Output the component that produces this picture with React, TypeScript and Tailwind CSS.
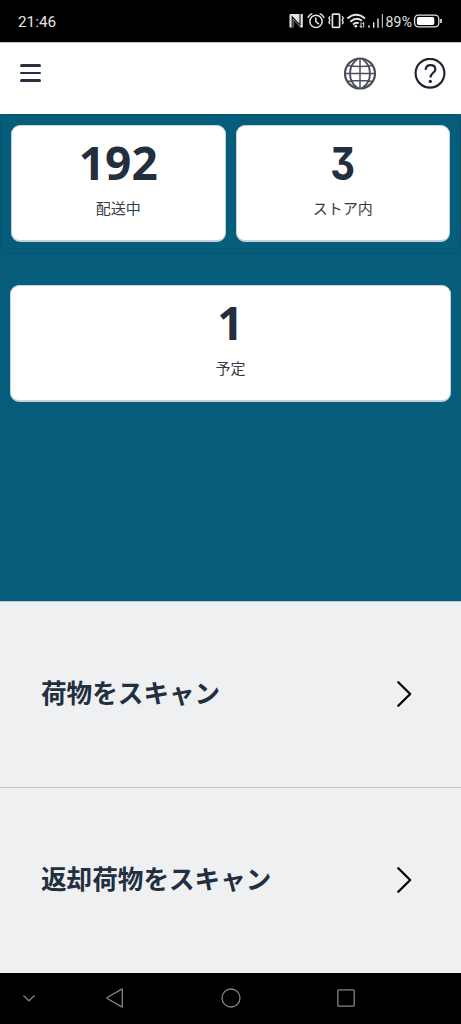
import type { ReactNode } from 'react';

type StatProps = {
  value: number;
  label: string;
};

type NavButtonProps = {
  label: string;
  children: ReactNode;
};

function StatusIcons() {
  return (
    <svg width="158" height="20" viewBox="286 11 158 20" fill="none" stroke="#e4e4e4" strokeWidth="1.5">
      {/* NFC */}
      <path d="M290.5 14H302.8V27.5H300.6L293.4 19.6V27.5H289.5V15Q289.5 14 290.5 14Z" fill="#e4e4e4" stroke="none" />
      <path d="M292.2 27.5V17L300 25.2V14" stroke="#000" strokeWidth="1.1" />
      {/* alarm */}
      <circle cx="316" cy="21.4" r="6.1" />
      <path d="M315.8 18V21.7L318.6 23.8M308.1 17.4Q309.3 15 311.8 13.9M323.9 17.4Q322.7 15 320.2 13.9" strokeLinecap="round" />
      {/* vibrate */}
      <rect x="332.4" y="14.2" width="7.2" height="13.2" rx="0.8" strokeWidth="1.7" />
      <path d="M329.9 16.3l-1 2 1 2-1 2 1 2M342.2 16.3l1 2-1 2 1 2-1 2" strokeWidth="1.4" />
      {/* wifi */}
      <path d="M347.4 18.4Q356.2 11 365 18.4M350.3 21.7Q356.4 16.5 362 20.8M353 24.5Q356 21.8 358.7 23.3" strokeWidth="1.9" />
      <circle cx="355.8" cy="26.2" r="1.4" fill="#e4e4e4" stroke="none" />
      <path d="M361 22.3V27.4M359.6 26l1.4 1.5 1.4-1.5M363.7 27.4V22.3M362.4 23.8l1.3-1.5" strokeWidth="1" />
      {/* signal */}
      <path d="M369 25.3V27.8M373.7 22.2V27.8M378 18.4V27.8" strokeWidth="1.4" />
      <path d="M382.4 14V27.8" strokeWidth="1.2" stroke="#b5b5b5" />
      <text x="385.5" y="26.6" fontSize="14" textLength="26.5" fill="#e4e4e4" stroke="none" className="font-[Roboto,sans-serif]">
        89%
      </text>
      {/* battery */}
      <rect x="414.6" y="15.1" width="24.2" height="11.8" rx="3.8" strokeWidth="1.3" />
      <rect x="416.9" y="17" width="17.4" height="8" rx="1.8" fill="#fff" stroke="none" />
      <path d="M441 19V23" strokeWidth="1.7" />
    </svg>
  );
}

function StatusBar() {
  return (
    <div className="flex h-[42px] items-center justify-between bg-black pl-[18px] pr-[17px] font-[Roboto,sans-serif] text-[15.3px] text-[#e4e4e4]">
      <span className="pt-[3px]">21:46</span>
      <StatusIcons />
    </div>
  );
}

function GlobeIcon() {
  return (
    <svg width="34" height="34" viewBox="0 0 34 34" fill="none" stroke="#4b5058" strokeWidth="1.5">
      <circle cx="17" cy="16.5" r="15" strokeWidth="2.2" />
      <path d="M17 1.5V31.5M2 16.5H32M4.4 8.6Q17 10.6 29.6 8.6M4.4 24.4Q17 22.4 29.6 24.4" />
      <path d="M14.5 2C4.5 9 4.5 24 14.5 31M19.5 2C29.5 9 29.5 24 19.5 31" strokeWidth="1.9" />
    </svg>
  );
}

function HelpIcon() {
  return (
    <svg width="32" height="32" viewBox="0 0 32 32" fill="none" stroke="#202733" strokeWidth="2.2">
      <circle cx="16" cy="15.2" r="14.4" />
      <path d="M11.6 11.8C11.8 8.9 13.6 7.2 16.4 7.2C19.3 7.2 21.3 8.9 21.3 11.4C21.3 14.8 16.5 14.9 16.5 19.4" />
      <circle cx="16.3" cy="23.4" r="1.7" fill="#202733" stroke="none" />
    </svg>
  );
}

function Header() {
  return (
    <header className="flex h-[72px] items-center border-t border-[#c4c4c4] bg-white pl-5 pr-[15px]">
      <button type="button" aria-label="メニュー" className="-mt-[11px] flex flex-col gap-[5px]">
        <span className="h-[2.5px] w-[21px] rounded-full bg-[#273040]" />
        <span className="h-[2.5px] w-[21px] rounded-full bg-[#273040]" />
        <span className="h-[2.5px] w-[21px] rounded-full bg-[#273040]" />
      </button>
      <div className="-mt-[9px] ml-auto flex items-center gap-[37px]">
        <button type="button" aria-label="言語">
          <GlobeIcon />
        </button>
        <button type="button" aria-label="ヘルプ">
          <HelpIcon />
        </button>
      </div>
    </header>
  );
}

function StatCard({ value, label }: StatProps) {
  // only Inter offers the flat-topped three, and it runs wider than Open Sans
  const digits =
    value === 3
      ? "scale-x-[0.85] font-[Inter,sans-serif] text-[45px] leading-[50px] [font-feature-settings:'cv09']"
      : "font-['Open_Sans','Noto_Sans',sans-serif] text-[46px] leading-[46px]";

  return (
    <div className="flex h-[117px] flex-1 flex-col items-center rounded-[9px] border border-b-2 border-[#c3d3da] bg-white pt-[13px]">
      <span className={`h-[50px] font-bold ${digits}`}>{value}</span>
      <span className="mt-[7px] text-[15px] leading-6 text-[#333b47]">{label}</span>
    </div>
  );
}

function ScanRow({ label }: { label: string }) {
  return (
    <button type="button" className="flex w-full flex-1 items-center justify-between border-t border-[#c1c3c5] pb-0.5 pl-[41px] pr-12">
      <span className="pb-[3px] text-[25.6px] font-bold leading-9">{label}</span>
      <svg width="18" height="30" viewBox="0 0 18 30" fill="none" stroke="#000" strokeWidth="2.3" strokeLinecap="round" strokeLinejoin="round">
        <path d="M3.3 3.2L15.2 15L3.3 26.8" />
      </svg>
    </button>
  );
}

function NavButton({ label, children }: NavButtonProps) {
  return (
    <button type="button" aria-label={label}>
      <svg width="24" height="24" viewBox="0 0 24 24" fill="none" stroke="#858585" strokeWidth="1.3" strokeLinejoin="round">
        {children}
      </svg>
    </button>
  );
}

function NavBar() {
  return (
    <nav className="flex h-[51px] items-center bg-black pb-px pl-[17px]">
      <NavButton label="閉じる">
        <path d="M6.5 9.5L12 14.7L17.5 9.5" />
      </NavButton>
      <div className="ml-[62px] flex gap-[91.5px]">
        <NavButton label="戻る">
          <path d="M19.3 3.3V20.7Q19.3 21.2 18.8 20.9L4.2 12.5Q3.6 12 4.2 11.5L18.8 3.1Q19.3 2.8 19.3 3.3Z" />
        </NavButton>
        <NavButton label="ホーム">
          <circle cx="12" cy="12" r="9" />
        </NavButton>
        <NavButton label="履歴">
          <rect x="3.8" y="3.8" width="16.4" height="16.4" rx="1" />
        </NavButton>
      </div>
    </nav>
  );
}

export default function App() {
  return (
    <div className="flex h-[1024px] w-[461px] flex-col overflow-hidden bg-[#eff0f2] font-['Noto_Sans_CJK_JP',sans-serif] text-[#232f3e]">
      <StatusBar />
      <Header />
      <main className="h-[487px] bg-[#065d7b]">
        <section className="flex gap-2.5 rounded-[9px] border border-[#07526d] px-2.5 pb-[11px] pt-2.5">
          <StatCard value={192} label="配送中" />
          <StatCard value={3} label="ストア内" />
        </section>
        <section className="mt-[31px] flex px-2.5">
          <StatCard value={1} label="予定" />
        </section>
      </main>
      <div className="flex flex-1 flex-col">
        <ScanRow label="荷物をスキャン" />
        <ScanRow label="返却荷物をスキャン" />
      </div>
      <NavBar />
    </div>
  );
}
